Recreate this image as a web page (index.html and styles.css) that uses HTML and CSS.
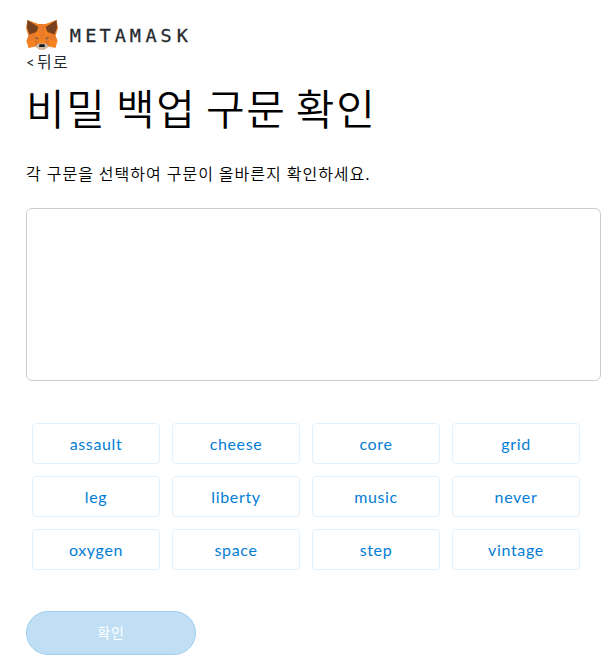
FILE: index.html
```html
<!DOCTYPE html>
<html lang="ko">
<head>
<meta charset="utf-8">
<title>MetaMask</title>
<link rel="stylesheet" href="styles.css">
</head>
<body>
<main class="page">
  <header class="brand">
    <svg class="fox" viewBox="0 0 32 31" aria-hidden="true">
      <path fill="#f58220" d="M1.500 1 12.500 5H19.500L30.500 1 32 9 29.500 17 31.500 22 29.500 29 22.500 27.500 18.500 30.500H13.500L9.500 27.500 2.500 29 .5 22 2.500 17 0 9Z"/>
      <path fill="#75411e" d="M1.500 1 12.500 8 10.500 13 3.500 15.500 1 9ZM30.500 1 19.500 8 21.500 13 28.500 15.500 31 9Z"/>
      <path fill="#e97b2b" d="M3 16 10 14 8.500 21 .5 22ZM29 16 22 14 23.500 21 31.500 22ZM12.500 5H19.500L18 20H14Z"/>
      <path fill="#df7329" d="M9 21 13 22 12 27 9.500 27ZM23 21 19 22 20 27 22.500 27Z"/>
      <path fill="#c06c33" d="M8 19 10.500 17 13 19.500 12 20.500ZM24 19 21.500 17 19 19.500 20 20.500Z"/>
      <path fill="#7d6350" d="M10 19H12.500V20.300H10.500ZM19.500 19H22L21.500 20.300H19.500Z"/>
      <path fill="#cbbaac" d="M12 24.500 9.500 27.500 13.500 30.500H18.500L22.500 27.500 20 24.500Z"/>
      <path fill="#17191a" d="M13.500 25.300H18.500L19 28H13Z"/>
    </svg>
    <svg class="wordmark" viewBox="0 0 126 31">
      <text class="wordmark-text" y="23" x="7.200 22.700 37 52.300 67.300 83 98 114.300">METAMASK</text>
    </svg>
  </header>
  <a class="back"><span class="chevron">&lt;</span>뒤로</a>
  <h1 class="title">비밀 백업 구문 확인</h1>
  <p class="lead">각 구문을 선택하여 구문이 올바른지 확인하세요.</p>
  <div class="selected"></div>
  <div class="words">
    <button class="word">assault</button>
    <button class="word">cheese</button>
    <button class="word">core</button>
    <button class="word">grid</button>
    <button class="word">leg</button>
    <button class="word">liberty</button>
    <button class="word">music</button>
    <button class="word">never</button>
    <button class="word">oxygen</button>
    <button class="word">space</button>
    <button class="word">step</button>
    <button class="word">vintage</button>
  </div>
  <button class="confirm" disabled>확인</button>
</main>
</body>
</html>
```

FILE: styles.css
```css
* { box-sizing: border-box; }
body {
  margin: 0;
  background: #fff;
  color: #000;
  font-family: "Noto Sans CJK KR", sans-serif;
}
.page {
  display: flex;
  flex-direction: column;
  align-items: flex-start;
  padding: 19px 9px 0 26px;
}
.brand { display: flex; gap: 10px; height: 31px; }
.fox { width: 32px; height: 31px; }
.wordmark { width: 126px; height: 31px; overflow: visible; }
.wordmark-text {
  font: 400 18.500px "DejaVu Sans Mono", monospace;
  fill: #24292e;
  stroke: #24292e;
  stroke-width: .3px;
  text-anchor: middle;
}
.back {
  display: flex;
  height: 22px;
  font-size: 16px;
  line-height: 22px;
  letter-spacing: 1.300px;
  color: #24292e;
}
.chevron {
  width: 11px;
  font-family: Lato, sans-serif;
  font-weight: 400;
  font-size: 15px;
  line-height: 24px;
}
.title {
  margin: 8px 0 0;
  height: 56px;
  font-size: 42px;
  font-weight: 350;
  line-height: 53px;
  letter-spacing: 1.700px;
  word-spacing: -4.200px;
  white-space: nowrap;
}
.lead {
  margin: 27px 0 0;
  height: 22px;
  font-size: 16px;
  font-weight: 350;
  line-height: 20px;
  letter-spacing: 1px;
  word-spacing: -.5px;
  white-space: nowrap;
}
.selected {
  align-self: stretch;
  height: 173px;
  margin-top: 23px;
  border: 1px solid #cdcdcd;
  border-radius: 6px;
}
.words {
  display: grid;
  grid-template-columns: repeat(4, 128px);
  grid-auto-rows: 41px;
  gap: 12px;
  margin: 42px 0 0 6px;
}
.word {
  padding: 0;
  border: 1px solid #e3f1fc;
  border-radius: 4px;
  background: #fff;
  color: #037dd6;
  font: 400 16px Lato, sans-serif;
  letter-spacing: .65px;
}
.confirm {
  width: 170px;
  height: 44px;
  margin-top: 41px;
  padding: 0 0 2px;
  border: 1px solid #9fcef0;
  border-radius: 22px;
  background: #c0dff5;
  color: #fff;
  font: 400 14px "Noto Sans CJK KR", sans-serif;
  letter-spacing: .8px;
}
```
